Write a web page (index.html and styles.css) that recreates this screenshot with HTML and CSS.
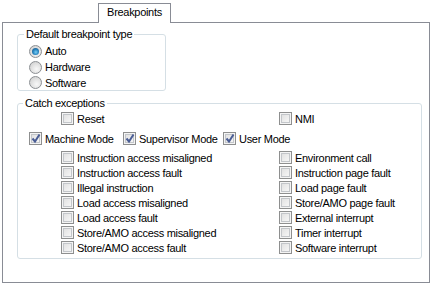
FILE: index.html
```html
<!DOCTYPE html>
<html lang="en">
<head>
<meta charset="UTF-8">
<title>Breakpoints</title>
<link rel="stylesheet" href="styles.css">
</head>
<body>

<!-- ===== Tab strip ===== -->
<div class="tabs">
  <div class="tab">Breakpoints</div>
</div>

<!-- ===== Tab page ===== -->
<div class="panel">

  <fieldset class="group type">
    <legend>Default breakpoint type</legend>
    <div class="body">
      <label class="opt"><span class="radio on"></span>Auto</label>
      <label class="opt"><span class="radio"></span>Hardware</label>
      <label class="opt"><span class="radio"></span>Software</label>
    </div>
  </fieldset>

  <fieldset class="group catch">
    <legend>Catch exceptions</legend>
    <div class="pair first">
      <label class="opt"><span class="cb"></span>Reset</label>
      <label class="opt"><span class="cb"></span>NMI</label>
    </div>
    <div class="modes">
      <label class="opt"><span class="cb on"></span>Machine Mode</label>
      <label class="opt"><span class="cb on"></span>Supervisor Mode</label>
      <label class="opt"><span class="cb on"></span>User Mode</label>
    </div>
    <div class="pair causes">
      <label class="opt"><span class="cb"></span>Instruction access misaligned</label>
      <label class="opt"><span class="cb"></span>Environment call</label>
      <label class="opt"><span class="cb"></span>Instruction access fault</label>
      <label class="opt"><span class="cb"></span>Instruction page fault</label>
      <label class="opt"><span class="cb"></span>Illegal instruction</label>
      <label class="opt"><span class="cb"></span>Load page fault</label>
      <label class="opt"><span class="cb"></span>Load access misaligned</label>
      <label class="opt"><span class="cb"></span>Store/AMO page fault</label>
      <label class="opt"><span class="cb"></span>Load access fault</label>
      <label class="opt"><span class="cb"></span>External interrupt</label>
      <label class="opt"><span class="cb"></span>Store/AMO access misaligned</label>
      <label class="opt"><span class="cb"></span>Timer interrupt</label>
      <label class="opt"><span class="cb"></span>Store/AMO access fault</label>
      <label class="opt"><span class="cb"></span>Software interrupt</label>
    </div>
  </fieldset>

</div>

</body>
</html>
```

FILE: styles.css
```css
:root{
  --edge:#898c95;
  --groupEdge:#d5dfe5;
  font-family:"Liberation Sans",Arial,sans-serif;
  font-size:11px;
  letter-spacing:-0.3px;
  color:#000;
}
*{box-sizing:border-box}
body,html{margin:0;padding:0;background:#fff}
body{width:432px;height:285px;overflow:hidden}

/* ===== Tab strip ===== */
.tabs{height:22px;padding-left:98px;padding-top:3px}
.tab{
  position:relative;z-index:1;
  width:73px;height:20px;line-height:13px;
  padding-top:2px;text-align:center;
  background:#fff;
  border:1px solid var(--edge);border-bottom:none;
}

/* ===== Tab page ===== */
.panel{
  margin:0 2px;height:261px;
  border:1px solid var(--edge);
  padding:0 0 0 14px;
}

/* ===== Group boxes ===== */
.group{
  margin:0;padding:0;
  border:1px solid var(--groupEdge);border-radius:3px;
}
.group legend{margin-left:6px;padding:0 2px;line-height:13px}
.type{width:149px;margin-top:5px}
.type .body{padding:2px 0 0 11px}
.catch{width:405px;margin-top:6px;padding:0 0 3px 0}
.catch legend{margin-left:5px}

/* ===== Options ===== */
.opt{display:flex;align-items:center;gap:3px;white-space:nowrap}
.type .opt{height:16px}
.type .opt:last-child{height:15px}

.radio,.cb{flex:none;width:13px;height:13px;display:inline-block}
.radio{
  border-radius:50%;border:1px solid #8c8f93;
  background:radial-gradient(circle at 60% 65%,#f8f8f8 0,#e4e4e4 45%,#c9c9c9 100%);
  position:relative;
}
.radio.on::after{
  content:"";position:absolute;left:2px;top:2px;width:7px;height:7px;border-radius:50%;
  background:radial-gradient(circle at 55% 60%,#7ad0f5 0,#2a86c2 45%,#13466f 100%);
}
.cb{
  border:1px solid #8e8f8f;
  box-shadow:inset 0 0 0 1px #f4f4f4,inset 0 0 0 2px #c3c6ca;
  background:linear-gradient(135deg,#dcdcdc 0%,#efefef 60%,#fbfbfb 100%);
  position:relative;
}
.cb.on::after{
  content:"";position:absolute;left:1px;top:0;width:10px;height:11px;
  background:url("data:image/svg+xml,%3Csvg xmlns='http://www.w3.org/2000/svg' width='10' height='11'%3E%3Cpath d='M1.5 5.5 L4 8.5 L8.5 1.5' fill='none' stroke='%234a5d95' stroke-width='2'/%3E%3C/svg%3E") no-repeat;
}

/* ===== Catch exceptions rows ===== */
.pair{display:grid;grid-template-columns:218px auto;margin-left:43px}
.first{height:17px}
.first .opt{height:17px}
.modes{
  display:grid;grid-template-columns:94px 100px auto;
  margin:3px 0 0 11px;height:17px
}
.modes .opt{height:17px}
.causes{margin-top:3px}
.causes .opt{height:15px}
```
